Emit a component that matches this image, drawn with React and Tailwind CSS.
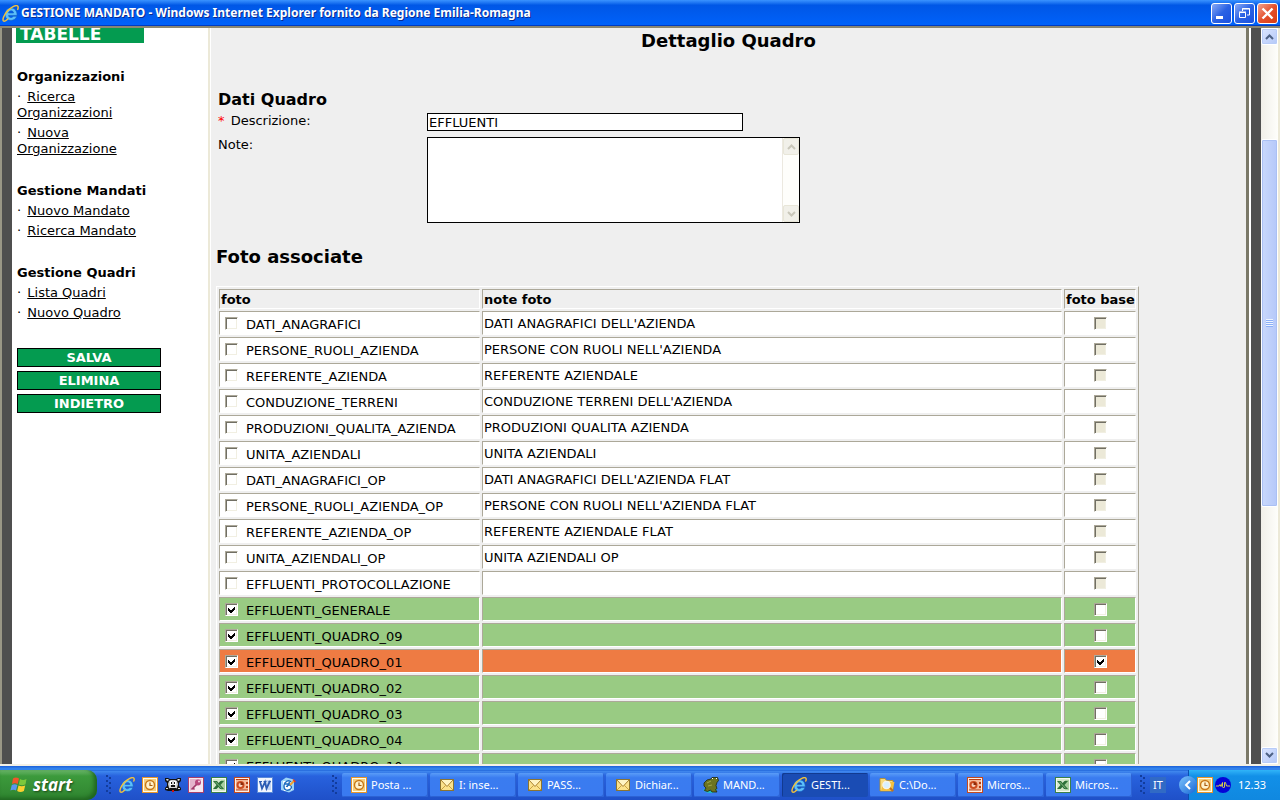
import { useState } from "react";

const menu = [
  { title: "Organizzazioni", links: ["Ricerca Organizzazioni", "Nuova Organizzazione"] },
  { title: "Gestione Mandati", links: ["Nuovo Mandato", "Ricerca Mandato"] },
  { title: "Gestione Quadri", links: ["Lista Quadri", "Nuovo Quadro"] },
];

const initialFoto = [
  { nome: "DATI_ANAGRAFICI", note: "DATI ANAGRAFICI DELL'AZIENDA" },
  { nome: "PERSONE_RUOLI_AZIENDA", note: "PERSONE CON RUOLI NELL'AZIENDA" },
  { nome: "REFERENTE_AZIENDA", note: "REFERENTE AZIENDALE" },
  { nome: "CONDUZIONE_TERRENI", note: "CONDUZIONE TERRENI DELL'AZIENDA" },
  { nome: "PRODUZIONI_QUALITA_AZIENDA", note: "PRODUZIONI QUALITA AZIENDA" },
  { nome: "UNITA_AZIENDALI", note: "UNITA AZIENDALI" },
  { nome: "DATI_ANAGRAFICI_OP", note: "DATI ANAGRAFICI DELL'AZIENDA FLAT" },
  { nome: "PERSONE_RUOLI_AZIENDA_OP", note: "PERSONE CON RUOLI NELL'AZIENDA FLAT" },
  { nome: "REFERENTE_AZIENDA_OP", note: "REFERENTE AZIENDALE FLAT" },
  { nome: "UNITA_AZIENDALI_OP", note: "UNITA AZIENDALI OP" },
  { nome: "EFFLUENTI_PROTOCOLLAZIONE", note: "" },
  { nome: "EFFLUENTI_GENERALE", note: "", checked: true },
  { nome: "EFFLUENTI_QUADRO_09", note: "", checked: true },
  { nome: "EFFLUENTI_QUADRO_01", note: "", checked: true, base: true },
  { nome: "EFFLUENTI_QUADRO_02", note: "", checked: true },
  { nome: "EFFLUENTI_QUADRO_03", note: "", checked: true },
  { nome: "EFFLUENTI_QUADRO_04", note: "", checked: true },
  { nome: "EFFLUENTI_QUADRO_10", note: "", checked: true },
];

/* ---------- Icons ---------- */

function IeIcon({ className = "size-4" }) {
  return (
    <svg viewBox="0 0 16 16" className={className} aria-hidden="true">
      <path
        d="M14.200 9.800H6.200c.2 1.400 1.100 2 2.300 2 1 0 1.700-.4 2.100-1.200h3.300c-.8 2.500-2.800 3.900-5.400 3.900-3.400 0-5.600-2.300-5.600-5.700s2.200-5.900 5.600-5.900 5.800 2.500 5.700 6.900zM6.200 7.500h4.700c-.2-1.300-1.100-2-2.300-2s-2.200.7-2.400 2z"
        fill="#5cc0fa"
        stroke="#1562c4"
        strokeWidth=".6"
      />
      <path
        d="M5.500 13.200C3.800 14.900 2.200 15.700 1.400 15 .2 13.900 1.700 9.400 5.300 5.500 8.900 1.600 13.400-.2 14.700 1c.7.700.6 1.900.1 3.100"
        fill="none"
        stroke="#f2c23c"
        strokeWidth="1.400"
        strokeLinecap="round"
      />
    </svg>
  );
}

function OutlookIcon({ className = "size-4" }) {
  return (
    <svg viewBox="0 0 16 16" className={className} aria-hidden="true">
      <rect width="16" height="16" fill="#e8962a" />
      <rect x="1" y="1" width="14" height="14" fill="#fffbe8" />
      <rect x="2" y="2" width="12" height="12" fill="#f6cf7c" />
      <circle cx="8" cy="8" r="4.500" fill="#fff3cc" stroke="#c87818" strokeWidth="1.400" />
      <path d="M8 5.500V8.500H10.500" fill="none" stroke="#a85c10" strokeWidth="1.200" />
    </svg>
  );
}

function DogIcon() {
  return (
    <svg viewBox="0 0 16 16" className="size-4" aria-hidden="true">
      <path
        d="M0 1h3l2 1h6l2-1h3v3l-2 2v3l2 2v2l-3 1H9v1H7v-1H3l-3-1v-2l2-2V6L0 4z"
        fill="#111"
      />
      <path d="M1 2h2l1 1-2 1zM15 2h-2l-1 1 2 1z" fill="#ddd" />
      <path d="M4 4l2-1h4l2 1 1 3-1 4-2 1H6l-2-1-1-4z" fill="#d4d4d4" />
      <path d="M5 4h2v4H5zM9 4h2v4H9z" fill="#fff" />
      <path d="M6 5h1v2H6zM9 5h1v2H9zM6 8h4v2H6zM5 11h6v1H5z" fill="#111" />
      <path d="M1 11h2v1H1zM13 11h2v1h-2z" fill="#ddd" />
      <rect x="7" y="13" width="2" height="2" fill="#d01010" />
    </svg>
  );
}

function AccessIcon() {
  return (
    <svg viewBox="0 0 16 16" className="size-4" aria-hidden="true">
      <rect width="16" height="16" fill="#a8406c" />
      <rect x="1" y="1" width="14" height="14" fill="#f8e8f0" />
      <path d="M2 2h12L2 14z" fill="#e4b4cc" />
      <circle cx="10" cy="5.500" r="3" fill="#b8487c" />
      <circle cx="11" cy="4.500" r="1" fill="#f4d4e4" />
      <path d="M8.500 7.500 3.500 12.500M5 11l1.500 1.500" stroke="#a03868" strokeWidth="1.700" />
    </svg>
  );
}

function ExcelIcon({ className = "size-4" }) {
  return (
    <svg viewBox="0 0 16 16" className={className} aria-hidden="true">
      <rect width="16" height="16" fill="#3c8048" />
      <rect x="1" y="1" width="14" height="14" fill="#f4faf0" />
      <path d="M2 2h12v12H2z" fill="#d4e8cc" />
      <path d="M10 3h4v10h-4z" fill="#a8d0a0" />
      <path d="M2 4h4l1.500 2L9.500 4h3.500L9.500 8l3.500 4H9L7.500 10l-2 2H2l3.500-4z" fill="#2c7038" />
      <path d="M4.500 4.800l6 6.500" stroke="#9fd09a" strokeWidth=".800" />
    </svg>
  );
}

function PowerPointIcon({ className = "size-4" }) {
  return (
    <svg viewBox="0 0 16 16" className={className} aria-hidden="true">
      <rect width="16" height="16" fill="#c44a20" />
      <rect x="1" y="1" width="14" height="14" fill="#fceee4" />
      <rect x="2" y="3" width="12" height="10" fill="#f4b898" />
      <circle cx="6.500" cy="8" r="4" fill="#cc4c20" />
      <circle cx="6.500" cy="8" r="2" fill="#f8d4c0" />
      <path d="M6.500 8V5a3 3 0 0 1 3 3z" fill="#8c2c0c" />
      <path d="M12 5h2v2h-2zM12 9h2v2h-2z" fill="#b83c14" />
      <path d="M2 13h12M2 2.500h12" stroke="#b83c14" />
    </svg>
  );
}

function WordIcon() {
  return (
    <svg viewBox="0 0 16 16" className="size-4" aria-hidden="true">
      <rect width="16" height="16" fill="#5a8ad8" />
      <rect x="1" y="1" width="14" height="14" fill="#f2f6fe" />
      <path d="M9 3h5v10H9z" fill="#c4d6f4" />
      <path
        d="M3 4.500L5 11.500 8 5l1.500 6.500L13 4"
        fill="none"
        stroke="#2c5cb4"
        strokeWidth="1.800"
      />
      <path d="M2 4.500h3M6.500 4.500h3M11.500 4.500h2.500" stroke="#2c5cb4" />
    </svg>
  );
}

function DesktopIcon() {
  return (
    <svg viewBox="0 0 16 16" className="size-4" aria-hidden="true">
      <path d="M1 4 6 .5l8 2V13l-5 2.500L1 13z" fill="#9cd4f8" />
      <path d="M3 4h8l1 9-8 1z" fill="#fff" />
      <path
        d="M11 5C9 2.500 4.500 4 4 8.500s3 5.500 6 4c1.500-1 2-3 .5-4s-4 0-4 1.500M9.500 5l-2.500 5M5 7h5"
        fill="none"
        stroke="#1c6cc0"
        strokeWidth="1.400"
      />
      <path d="M10 8l4-4" stroke="#f0a030" strokeWidth="1.800" />
      <path d="M13 2.500l2.500 2.500" stroke="#e03c20" strokeWidth="1.500" />
    </svg>
  );
}

function MailIcon() {
  return (
    <svg viewBox="0 0 16 16" className="size-4" aria-hidden="true">
      <rect x="1.500" y="2.500" width="13" height="11" fill="#fbe28c" stroke="#8c7430" />
      <path d="M2 13l4.500-4.500M14 13 9.500 8.500" stroke="#c8a040" />
      <path d="M2 3l6 6.500L14 3" fill="#fff4c4" stroke="#a88030" />
    </svg>
  );
}

function FrogIcon() {
  return (
    <svg viewBox="0 0 16 16" className="size-4" aria-hidden="true">
      <path d="M0 12h14v1l-4 3H5l-4-2z" fill="#20b8c8" />
      <path
        d="M1 6l3-3 4-1 1-1.500h5.500l1 3-1.500 2-1 3 1 3-1.500 1 1.500 2.500H9L7.500 13l-3 1.500-3-1L3 11 1 9z"
        fill="#6c7420"
        stroke="#20280c"
        strokeWidth=".800"
      />
      <path d="M9 1h1v1H9zM13 1h1v1h-1z" fill="#fff" />
      <path d="M4 6l4-2M5 9l4-1" stroke="#a0a848" />
    </svg>
  );
}

function FolderSearchIcon() {
  return (
    <svg viewBox="0 0 16 16" className="size-4" aria-hidden="true">
      <path d="M1 1.500h5l1.500 2H14V14H1z" fill="#f8dc80" stroke="#b88a20" strokeWidth=".800" />
      <path d="M2 14 4.500 5h11l-2 9z" fill="#f4c040" />
      <path d="M11 11l3 3" stroke="#c07020" strokeWidth="2" />
      <circle cx="7.500" cy="8" r="3.700" fill="#d8f0ff" stroke="#f8f4e8" strokeWidth="1.200" />
    </svg>
  );
}

function WaveIcon() {
  return (
    <svg viewBox="0 0 16 16" className="size-4" aria-hidden="true">
      <circle cx="8" cy="8" r="8" fill="#0404d8" />
      <path
        d="M1 9h3l1-1.500L6 9.500 7.500 5.500v4L8.500 11l1-1V5.500h1L11.500 9H15"
        fill="none"
        stroke="#e8e040"
        strokeWidth=".900"
      />
    </svg>
  );
}

function WindowsFlag() {
  return (
    <svg viewBox="0 0 18 18" className="size-[18px]" aria-hidden="true">
      <path d="M3 2.500C5 1 7 1.200 9 2.500L7.700 8C6 6.900 4 6.900 2 8z" fill="#f0562c" />
      <path d="M10 3c2 1.200 4 1.200 6.500 0L15.500 8.300c-2.200 1.200-4.500 1.200-6.700.1z" fill="#7cc83c" />
      <path d="M1.800 9C3.600 7.900 5.600 7.900 7.400 9L6 14.500c-1.700-1.100-3.700-1.100-5.600 0z" fill="#5a96f0" />
      <path d="M8.500 9.500c2 1.100 4.300 1.100 6.700 0L13.900 15c-2.300 1.200-4.700 1.200-6.700 0z" fill="#fcd030" />
    </svg>
  );
}

function Chevron({ up, color }) {
  return (
    <svg viewBox="0 0 9 6" className="h-[6px] w-[9px]" aria-hidden="true">
      <path
        d={up ? "M1 5l3.500-3.500L8 5" : "M1 1l3.500 3.500L8 1"}
        fill="none"
        stroke={color}
        strokeWidth="2"
      />
    </svg>
  );
}

/* ---------- Browser window ---------- */

function TitleBar() {
  const button =
    "grid size-[21px] place-items-center rounded-[3px] border border-white bg-linear-to-br";
  return (
    <header className="flex h-[26px] shrink-0 items-center gap-[2px] bg-linear-to-b from-[#3a93ff] via-[#0057e6] via-20% to-[#0062fb] px-[2px] shadow-[inset_0_-1px_#003cc0]">
      <IeIcon className="size-[17px]" />
      <h1 className="flex-1 truncate font-['Noto_Sans','Open_Sans',sans-serif] text-[12px] leading-[18px] font-bold text-white [text-shadow:1px_1px_#0a2a90]">
        GESTIONE MANDATO - Windows Internet Explorer fornito da Regione Emilia-Romagna
      </h1>
      <div className="flex gap-[2px]">
        <button aria-label="Riduci a icona" className={`${button} from-[#8aa8f4] via-[#2a62e4] to-[#1a50e0]`}>
          <svg viewBox="0 0 19 19" className="size-[19px]" aria-hidden="true">
            <path d="M4 12h7v3H4z" fill="#fff" />
          </svg>
        </button>
        <button aria-label="Ripristina" className={`${button} from-[#8aa8f4] via-[#2a62e4] to-[#1a50e0]`}>
          <svg viewBox="0 0 19 19" className="size-[19px]" fill="none" stroke="#fff" aria-hidden="true">
            <path d="M7.500 7V4.500h7V11H12M7 5h8" />
            <path d="M4.500 8.500h6v5h-6zM4 8h7" />
          </svg>
        </button>
        <button aria-label="Chiudi" className={`${button} from-[#f0a08c] via-[#e4502c] to-[#d83c10]`}>
          <svg viewBox="0 0 19 19" className="size-[19px]" aria-hidden="true">
            <path d="M4.500 4.500l10 10M14.500 4.500l-10 10" stroke="#fff" strokeWidth="2.400" />
          </svg>
        </button>
      </div>
    </header>
  );
}

function ScrollBar() {
  const button =
    "grid h-[17px] w-full shrink-0 place-items-center rounded-[2px] border border-white bg-linear-to-br from-[#dbe5ff] to-[#b4c8f8] shadow-[inset_0_0_0_1px_#b8ccf8]";
  return (
    <div className="flex w-[17px] shrink-0 flex-col bg-linear-to-r from-[#f1efe9] to-[#fefefb]">
      <button aria-label="Scorri su" className={button}>
        <Chevron up color="#4d6185" />
      </button>
      <div className="grow-[94] basis-0" />
      <div className="grid grow-[368] basis-0 place-items-center rounded-[2px] border border-white bg-linear-to-r from-[#c9d8fc] to-[#b5c8f9] shadow-[inset_0_0_0_1px_#aac0f4]">
        <div className="h-2 w-[7px] bg-[repeating-linear-gradient(#eef4fe_0_1px,#8cb0f8_1px_2px)]" />
      </div>
      <div className="grow-[241] basis-0" />
      <button aria-label="Scorri giù" className={button}>
        <Chevron color="#4d6185" />
      </button>
    </div>
  );
}

/* ---------- Page ---------- */

function Sidebar() {
  return (
    <aside className="w-[198px] shrink-0 border-r-2 border-[#ece9d8] bg-white pl-1">
      <div className="flex h-[15px] w-32 items-end overflow-hidden bg-[#049b50] pl-1">
        <span className="text-[17px] leading-[18px] font-bold text-white">TABELLE</span>
      </div>
      <nav className="w-[145px] pl-px">
        {menu.map((group) => (
          <section key={group.title} className="mt-[26px]">
            <h2 className="font-bold">{group.title}</h2>
            <ul>
              {group.links.map((link) => (
                <li key={link} className="mt-1">
                  <span className="mr-[2px]">·</span>{" "}
                  <a href="#" className="underline">
                    {link}
                  </a>
                </li>
              ))}
            </ul>
          </section>
        ))}
      </nav>
      <div className="mt-[27px] flex w-[145px] flex-col gap-1 pl-px">
        {["SALVA", "ELIMINA", "INDIETRO"].map((label) => (
          <button
            key={label}
            className="h-[19px] border border-black bg-[#049b50] leading-[16px] font-bold text-white"
          >
            {label}
          </button>
        ))}
      </div>
    </aside>
  );
}

function CheckBox(props) {
  return (
    <span className="inline-grid size-[13px] place-items-center align-top *:[grid-area:1/1]">
      <input
        type="checkbox"
        className="peer size-[13px] appearance-none border border-t-[#aca899] border-r-white border-b-white border-l-[#aca899] bg-white shadow-[inset_1px_1px_#716f64,inset_-1px_-1px_#f1efe2] disabled:bg-[#ece9d8]"
        {...props}
      />
      <svg
        viewBox="0 0 7 7"
        className="pointer-events-none invisible size-[7px] peer-checked:visible"
        shapeRendering="crispEdges"
        aria-hidden="true"
      >
        <path d="M0 2v3l2 2h1l4-4V0L3 4z" />
      </svg>
    </span>
  );
}

function FotoTable() {
  const [foto, setFoto] = useState(initialFoto);

  const toggle = (nome, field) => {
    setFoto(foto.map((f) => (f.nome === nome ? { ...f, [field]: !f[field] } : f)));
  };

  const cell = "border border-t-[#aca899] border-r-white border-b-white border-l-[#aca899]";

  return (
    <table className="w-full table-fixed border-separate border-spacing-[2px] border border-t-white border-r-[#aca899] border-b-[#aca899] border-l-white">
      <colgroup>
        <col className="w-[261px]" />
        <col />
        <col className="w-[72px]" />
      </colgroup>
      <thead>
        <tr className="h-5 text-left">
          <th className={`${cell} px-px pt-[2px] pb-0`}>foto</th>
          <th className={`${cell} px-px pt-[2px] pb-0`}>note foto</th>
          <th className={`${cell} px-px pt-[2px] pb-0 whitespace-nowrap`}>foto base</th>
        </tr>
      </thead>
      <tbody>
        {foto.map((f) => (
          <tr
            key={f.nome}
            className={`h-6 align-top ${f.base ? "bg-[#ee7b43]" : f.checked ? "bg-[#99cb83]" : "bg-white"}`}
          >
            <td className={`${cell} py-0 pl-[5px]`}>
              <label className="flex items-start gap-2">
                <span className="h-[18px] pt-[5px]">
                  <CheckBox checked={!!f.checked} onChange={() => toggle(f.nome, "checked")} />
                </span>
                <span className="pt-[5px]">{f.nome}</span>
              </label>
            </td>
            <td className={`${cell} px-px pt-1 pb-0`}>{f.note}</td>
            <td className={`${cell} px-0 pt-[5px] pb-0 text-center`}>
              <CheckBox
                aria-label={`foto base ${f.nome}`}
                checked={!!f.base}
                disabled={!f.checked}
                onChange={() => toggle(f.nome, "base")}
              />
            </td>
          </tr>
        ))}
      </tbody>
    </table>
  );
}

function Dettaglio() {
  const [descrizione, setDescrizione] = useState("EFFLUENTI");
  const [note, setNote] = useState("");

  return (
    <main className="min-w-0 flex-1 border-l border-white bg-[#efefef] pl-[5px]">
      <h2 className="pt-px pr-[5px] text-center text-[18px] leading-6 font-bold">Dettaglio Quadro</h2>

      <form className="mt-9 pl-[2px]">
        <h3 className="pt-px text-[16px] leading-5 font-bold">Dati Quadro</h3>
        <div className="mt-[3px] flex">
          <label htmlFor="descrizione" className="w-[209px]">
            <span className="mr-[2px] text-[#ff0000]">*</span> Descrizione:
          </label>
          <input
            id="descrizione"
            type="text"
            value={descrizione}
            onChange={(e) => setDescrizione(e.target.value)}
            className="h-[18px] w-[316px] border border-black bg-white px-px"
          />
        </div>
        <div className="mt-[6px] flex">
          <label htmlFor="note" className="w-[209px]">
            Note:
          </label>
          <div className="flex h-[86px] w-[373px] border border-black bg-white">
            <textarea
              id="note"
              value={note}
              onChange={(e) => setNote(e.target.value)}
              className="min-w-0 flex-1 resize-none overflow-hidden px-px"
            />
            <div className="flex w-[17px] flex-col justify-between border-l border-[#ece9e0] bg-[#fefefb]">
              <div className="grid h-[17px] place-items-center rounded-[2px] border border-[#e8e6d8] bg-[#f1f0e9]">
                <Chevron up color="#c9c7ba" />
              </div>
              <div className="grid h-[17px] place-items-center rounded-[2px] border border-[#e8e6d8] bg-[#f1f0e9]">
                <Chevron color="#c9c7ba" />
              </div>
            </div>
          </div>
        </div>
      </form>

      <h3 className="mt-[22px] text-[18px] leading-6 font-bold">Foto associate</h3>
      <div className="mt-[17px] pr-[107px]">
        <FotoTable />
      </div>
    </main>
  );
}

/* ---------- Taskbar ---------- */

const tasks = [
  { label: "Posta ...", icon: <OutlookIcon /> },
  { label: "I: inse...", icon: <MailIcon /> },
  { label: "PASS...", icon: <MailIcon /> },
  { label: "Dichiar...", icon: <MailIcon /> },
  { label: "MAND...", icon: <FrogIcon /> },
  { label: "GESTI...", icon: <IeIcon />, active: true },
  { label: "C:\\Do...", icon: <FolderSearchIcon /> },
  { label: "Micros...", icon: <PowerPointIcon /> },
  { label: "Micros...", icon: <ExcelIcon /> },
];

const quickLaunch = [
  { label: "Internet Explorer", icon: <IeIcon /> },
  { label: "Outlook", icon: <OutlookIcon /> },
  { label: "Cane", icon: <DogIcon /> },
  { label: "Access", icon: <AccessIcon /> },
  { label: "Excel", icon: <ExcelIcon /> },
  { label: "PowerPoint", icon: <PowerPointIcon /> },
  { label: "Word", icon: <WordIcon /> },
  { label: "Mostra desktop", icon: <DesktopIcon /> },
];

function Grip() {
  return (
    <svg viewBox="0 0 6 20" className="h-5 w-[6px] shrink-0" shapeRendering="crispEdges" aria-hidden="true">
      <path
        d="M0 0h2v2H0zM3 2h2v2H3zM0 5h2v2H0zM3 7h2v2H3zM0 10h2v2H0zM3 12h2v2H3zM0 15h2v2H0zM3 17h2v2H3z"
        fill="#123c9c"
      />
    </svg>
  );
}

function Taskbar() {
  return (
    <footer className="flex h-[36px] shrink-0 border-t-2 border-[#f4f1e6] bg-linear-to-b from-[#1d5fd8] via-[#3486ee] via-8% to-[#2f7ce8] to-15% font-['Noto_Sans',sans-serif] text-[11px] leading-4 text-white">
      <div className="mt-1 flex flex-1 items-center bg-linear-to-b from-[#4690f2] via-[#2862de] via-20% to-[#1f50c8] shadow-[inset_0_1px_#2a70e0]">
        <button className="flex h-full w-[97px] items-center gap-[5px] rounded-r-[10px] bg-linear-to-b from-[#6cb86c] via-[#3c9a3c] via-20% to-[#2f8430] pl-[10px] shadow-[inset_-3px_-2px_4px_#1f641f]">
          <WindowsFlag />
          <span className="font-['Open_Sans','Noto_Sans',sans-serif] text-[17px] leading-5 font-bold italic [text-shadow:1px_1px_2px_#1a4a1a]">
            start
          </span>
        </button>

        <div className="ml-[9px] flex flex-1 items-center">
          <Grip />
          <div className="ml-[7px] flex items-center gap-[7px]">
            {quickLaunch.map((q) => (
              <button key={q.label} aria-label={q.label} className="grid size-4 place-items-center">
                {q.icon}
              </button>
            ))}
          </div>
        </div>

        <Grip />
        <div className="ml-1 flex gap-[2px]">
          {tasks.map((t, i) => (
            <button
              key={i}
              className={`flex h-6 w-[86px] items-center gap-1 rounded-[2px] pl-[9px] ${
                t.active
                  ? "bg-[#1a4cb4] shadow-[inset_1px_1px_#123a90]"
                  : "bg-linear-to-b from-[#5a9cf8] via-[#3a7cf0] via-20% to-[#3a7af0] shadow-[inset_-1px_-1px_#2c62d4]"
              }`}
            >
              {t.icon}
              <span className="whitespace-nowrap">{t.label}</span>
            </button>
          ))}
        </div>

        <div className="ml-2 flex w-12 items-center gap-1">
          <Grip />
          <button className="h-4 w-4 bg-[#316ac5] text-center">IT</button>
        </div>

        <div className="relative flex h-full w-[92px] items-center bg-linear-to-b from-[#30b4f8] via-[#1290e8] via-20% to-[#1088e0] pl-[9px] shadow-[inset_1px_0_#0a50b0]">
          <button
            aria-label="Mostra icone nascoste"
            className="absolute -left-[9px] grid size-[18px] place-items-center rounded-full bg-linear-to-br from-[#7cc4fc] to-[#1464d4]"
          >
            <svg viewBox="0 0 8 10" className="h-[10px] w-2" aria-hidden="true">
              <path d="M6 1 2 5l4 4" fill="none" stroke="#fff" strokeWidth="2" />
            </svg>
          </button>
          <div className="flex items-center gap-[2px]">
            <OutlookIcon />
            <WaveIcon />
          </div>
          <span className="ml-[7px]">12.33</span>
        </div>
      </div>
    </footer>
  );
}

export default function App() {
  return (
    <div className="flex h-screen flex-col overflow-hidden bg-white font-['DejaVu_Sans',Verdana,sans-serif] text-[13px] leading-4 text-black">
      <TitleBar />
      <div className="flex min-h-0 flex-1 overflow-hidden border-t-2 border-[#8a8672]">
        <div className="w-3 shrink-0 border-l-2 border-[#9a9786] bg-[#4f4f4f]" />
        <Sidebar />
        <Dettaglio />
        <div className="w-[15px] shrink-0 border-l-3 border-[#7a7868] bg-[#4f4f4f] shadow-[inset_2px_0_#fff]" />
        <ScrollBar />
        <div className="w-[2px] shrink-0 bg-[#ece9d8]" />
      </div>
      <Taskbar />
    </div>
  );
}
